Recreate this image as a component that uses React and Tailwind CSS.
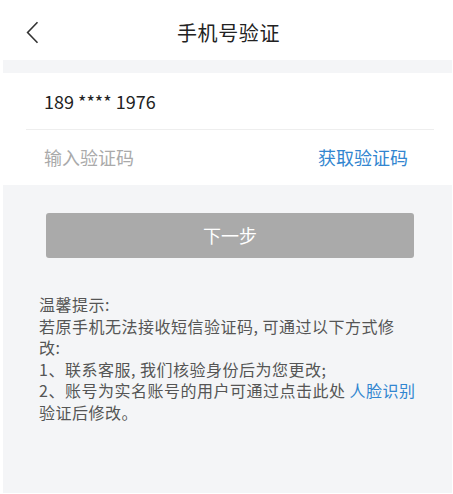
export default function App() {
  const font = { fontFamily: '"Noto Sans CJK SC", "Noto Sans", sans-serif' };

  return (
    <div
      className="w-[453px] h-[494px] bg-white flex flex-col overflow-hidden"
      style={font}
    >
      {/* header */}
      <div className="h-[60px] flex items-center relative shrink-0">
        <button className="absolute left-[24px] top-[20px] w-[16px] h-[25px] flex items-center justify-center">
          <svg width="13" height="23" viewBox="0 0 13 23" fill="none">
            <path d="M11.5 1.2 L1.6 11.5 L11.5 21.8" stroke="#333" strokeWidth="1.6" />
          </svg>
        </button>
        <div className="flex-1 text-center text-[20px] text-[#222] leading-none pt-[6px] pl-[4px] tracking-[0.6px]">
          手机号验证
        </div>
      </div>

      {/* body */}
      <div className="flex-1 ml-[3px] mr-px mb-px bg-[#f4f5f7] flex flex-col">
        <div className="h-[13px]" />
        <div className="bg-white">
          <div className="h-[56px] flex items-center pl-[41px] text-[18px] text-[#222]">
            189 **** 1976
          </div>
          <div className="mx-[23px] mr-[18px] h-px bg-[#eeeeee]" />
          <div className="h-[55px] flex items-center justify-between pl-[41px] pr-[44px] text-[18px]">
            <span className="text-[#aaaaaa]">输入验证码</span>
            <span className="text-[#3286d0]">获取验证码</span>
          </div>
        </div>

        <button className="mt-[28px] ml-[43px] w-[368px] h-[45px] rounded-[3px] bg-[#aaaaaa] text-white text-[18px] flex items-center justify-center">
          下一步
        </button>

        <div className="mt-[36px] ml-[36px] text-[16px] leading-[21.6px] text-[#555] tracking-[0.5px]">
          <div>温馨提示:</div>
          <div>若原手机无法接收短信验证码, 可通过以下方式修</div>
          <div>改:</div>
          <div>1、联系客服, 我们核验身份后为您更改;</div>
          <div>
            2、账号为实名账号的用户可通过点击此处{" "}
            <span className="text-[#3286d0]">人脸识别</span>
          </div>
          <div>验证后修改。</div>
        </div>
      </div>
    </div>
  );
}
